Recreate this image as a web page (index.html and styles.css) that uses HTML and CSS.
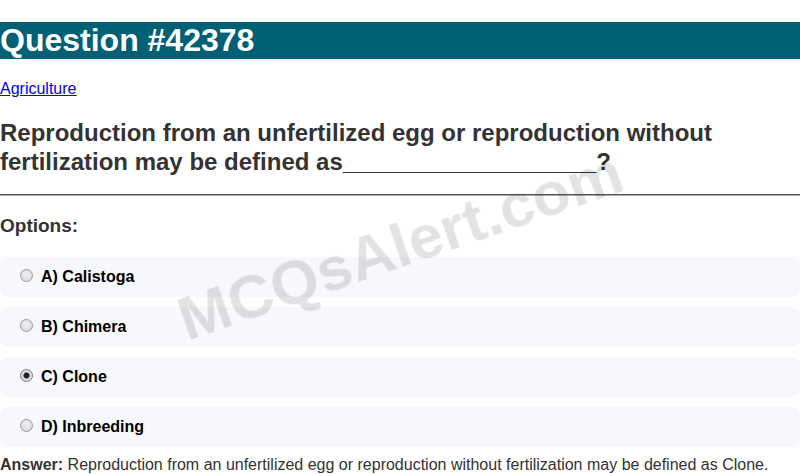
FILE: index.html
```html
<!DOCTYPE html>
<html>
<head>
<meta charset="utf-8">
<link rel="stylesheet" href="styles.css">
</head>
<body>
<div class="watermark">MCQsAlert.com</div>
<h1 class="title">Question #42378</h1>
<p class="cat"><a href="#">Agriculture</a></p>
<h2 class="question">Reproduction from an unfertilized egg or reproduction without fertilization may be defined as___________________?</h2>
<hr class="sep">
<h3 class="opts-title">Options:</h3>
<div class="options">
  <label class="option"><input type="radio" name="q"> A) Calistoga</label>
  <label class="option"><input type="radio" name="q"> B) Chimera</label>
  <label class="option"><input type="radio" name="q" checked> C) Clone</label>
  <label class="option"><input type="radio" name="q"> D) Inbreeding</label>
</div>
<p class="answer"><strong>Answer:</strong> Reproduction from an unfertilized egg or reproduction without fertilization may be defined as Clone.</p>
</body>
</html>
```
FILE: styles.css
```css
html, body {
  margin: 0;
  padding: 0;
  background: #fff;
  font-family: "Liberation Sans", Arial, sans-serif;
  color: #333;
  overflow: hidden;
}
.title {
  font-size: 32px;
  margin: 22px 0 21px;
  background: #006074;
  color: #fff;
  font-weight: bold;
}
.cat {
  margin: 21px 0 20px;
  font-size: 16px;
}
.cat a {
  color: #0000ee;
}
.question {
  font-size: 24px;
  line-height: 29px;
  margin: 20px 0 18px;
  color: #333;
}
.sep {
  margin: 0;
  border: 0;
  border-top: 1px solid #555;
  border-bottom: 1px solid #aaa;
  height: 0;
}
.opts-title {
  font-size: 19px;
  margin: 19px 0 20px;
  color: #333;
}
.options {
  display: flex;
  flex-direction: column;
  gap: 10px;
}
.option {
  display: flex;
  align-items: center;
  background: #f7f8fb;
  border-radius: 8px;
  padding: 11px 15px;
  font-size: 16px;
  font-weight: bold;
  color: #000;
  line-height: 18px;
}
.option input {
  -webkit-appearance: none;
  appearance: none;
  margin: 0 8px 0 5px;
  width: 13px;
  height: 13px;
  border-radius: 50%;
  border: 1px solid #9a9a9a;
  background: radial-gradient(circle at 50% 40%, #f0f0f0 0%, #d6d6d6 100%);
  box-sizing: border-box;
  position: relative;
  top: -2px;
  flex: none;
}
.option input:checked {
  border-color: #777;
  background: radial-gradient(circle, #222 0, #222 2.5px, #d9d9d9 3.5px, #ececec 100%);
}
.answer {
  margin: 9px 0 0;
  font-size: 16px;
  color: #333;
}
.answer strong {
  color: #333;
}
.watermark {
  position: fixed;
  left: 50%;
  top: 245px;
  transform: translate(-50%, -50%) rotate(-19deg);
  font-size: 62px;
  font-weight: bold;
  color: rgba(0, 0, 0, 0.11);
  white-space: nowrap;
  pointer-events: none;
  z-index: 10;
}
```
